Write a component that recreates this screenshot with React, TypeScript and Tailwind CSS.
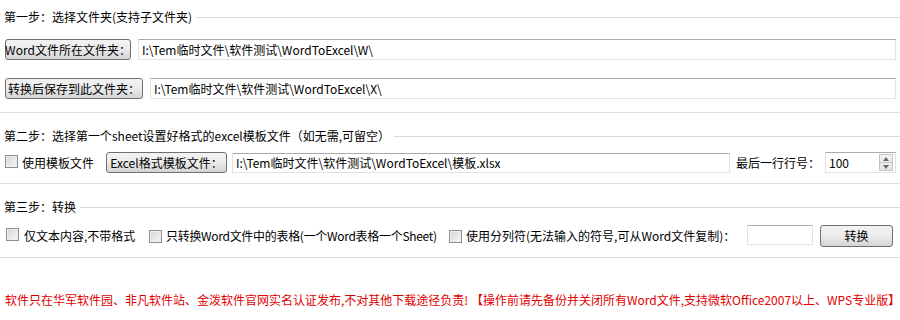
import React from "react";

function CheckBox() {
    return (
        <span className="inline-block w-[13px] h-[13px] shrink-0 border border-[#8f8f8f] bg-linear-to-br from-[#d4d4d4] to-[#f7f7f7] shadow-[inset_0_0_0_1px_#eeeeee]" />
    );
}

function Btn({ text, className = "" }: { text: string; className?: string }) {
    return (
        <div
            className={
                "shrink-0 flex items-center justify-center whitespace-nowrap rounded-[3px] border border-[#707070] bg-linear-to-b from-[#f3f3f3] via-[#ebebeb] to-[#d4d4d4] text-[12px] leading-none text-black " +
                className
            }
        >
            {text}
        </div>
    );
}

function Field({ text = "", className = "" }: { text?: string; className?: string }) {
    return (
        <div
            className={
                "flex items-center whitespace-nowrap overflow-hidden border border-[#e2e2e2] border-t-[#ababab] bg-white pl-[3px] text-[12px] leading-none " +
                className
            }
        >
            {text}
        </div>
    );
}

function GroupHeader({ label }: { label: string }) {
    return (
        <div className="flex items-center h-[14px] leading-[14px]">
            <span className="pl-[4px] pr-[4px] whitespace-nowrap">{label}</span>
            <div className="flex-1 h-px bg-[#d9d9d9]" />
        </div>
    );
}

export default function App() {
    return (
        <main className="w-[900px] h-[320px] overflow-hidden bg-white text-black text-[12px] font-['Noto_Sans_CJK_SC',sans-serif] flex flex-col">
            {/* Step 1 */}
            <section className="pt-[10px] pb-[13px] border-b border-[#dcdcdc]">
                <GroupHeader label="第一步：选择文件夹(支持子文件夹)" />
                <div className="mt-[15px] h-[21px] flex items-center pr-[4px]">
                    <Btn text="Word文件所在文件夹：" className="ml-[5px] w-[126px] h-[21px]" />
                    <Field text="I:\Tem临时文件\软件测试\WordToExcel\W\" className="ml-[7px] flex-1 h-[21px]" />
                </div>
                <div className="mt-[18px] h-[21px] flex items-center pr-[4px]">
                    <Btn text="转换后保存到此文件夹：" className="ml-[5px] w-[138px] h-[21px]" />
                    <Field text="I:\Tem临时文件\软件测试\WordToExcel\X\" className="ml-[7px] flex-1 h-[21px]" />
                </div>
            </section>

            {/* Step 2 */}
            <section className="pt-[16px] pb-[10px] border-b border-[#dcdcdc]">
                <GroupHeader label="第二步：选择第一个sheet设置好格式的excel模板文件（如无需,可留空）" />
                <div className="mt-[9px] h-[21px] flex items-center">
                    <span className="ml-[5px]">
                        <CheckBox />
                    </span>
                    <span className="ml-[4px] w-[84px] whitespace-nowrap">使用模板文件</span>
                    <Btn text="Excel格式模板文件：" className="w-[121px] h-[21px]" />
                    <Field text="I:\Tem临时文件\软件测试\WordToExcel\模板.xlsx" className="ml-[5px] w-[498px] h-[20px]" />
                    <span className="ml-[6px] w-[89px] whitespace-nowrap">最后一行行号：</span>
                    <div className="w-[71px] h-[21px] flex items-center border border-[#e2e2e2] border-t-[#ababab] bg-white">
                        <span className="flex-1 pl-[3px] leading-none">100</span>
                        <div className="mr-[2px] w-[14px] h-[17px] flex flex-col border border-[#c3c3c3] bg-linear-to-b from-[#f4f4f4] to-[#e4e4e4]">
                            <div className="flex-1 flex items-center justify-center border-b border-[#c8c8c8]">
                                <svg width="6" height="4" viewBox="0 0 6 4">
                                    <path d="M0 4 L3 0 L6 4 Z" fill="#6a6a6a" />
                                </svg>
                            </div>
                            <div className="flex-1 flex items-center justify-center">
                                <svg width="6" height="4" viewBox="0 0 6 4">
                                    <path d="M0 0 L3 4 L6 0 Z" fill="#6a6a6a" />
                                </svg>
                            </div>
                        </div>
                    </div>
                </div>
            </section>

            {/* Step 3 */}
            <section className="pt-[16px] pb-[10px] border-b border-[#dcdcdc]">
                <GroupHeader label="第三步：转换" />
                <div className="mt-[11px] h-[22px] flex items-center">
                    <span className="ml-[6px]">
                        <CheckBox />
                    </span>
                    <span className="ml-[5px] w-[125px] whitespace-nowrap">仅文本内容,不带格式</span>
                    <CheckBox />
                    <span className="ml-[4px] w-[283px] whitespace-nowrap tracking-[-0.3px]">只转换Word文件中的表格(一个Word表格一个Sheet)</span>
                    <CheckBox />
                    <span className="ml-[4px] w-[281px] whitespace-nowrap">使用分列符(无法输入的符号,可从Word文件复制)：</span>
                    <Field className="w-[66px] h-[20px] self-start" />
                    <Btn text="转换" className="ml-[7px] w-[73px] h-[22px]" />
                </div>
            </section>

            {/* Notice */}
            <p className="mt-[35px] pl-[5px] leading-[14px] whitespace-nowrap text-[#e00000]">
                软件只在华军软件园、非凡软件站、金泼软件官网实名认证发布,不对其他下载途径负责! 【操作前请先备份并关闭所有Word文件,支持微软Office2007以上、WPS专业版】
            </p>
        </main>
    );
}
